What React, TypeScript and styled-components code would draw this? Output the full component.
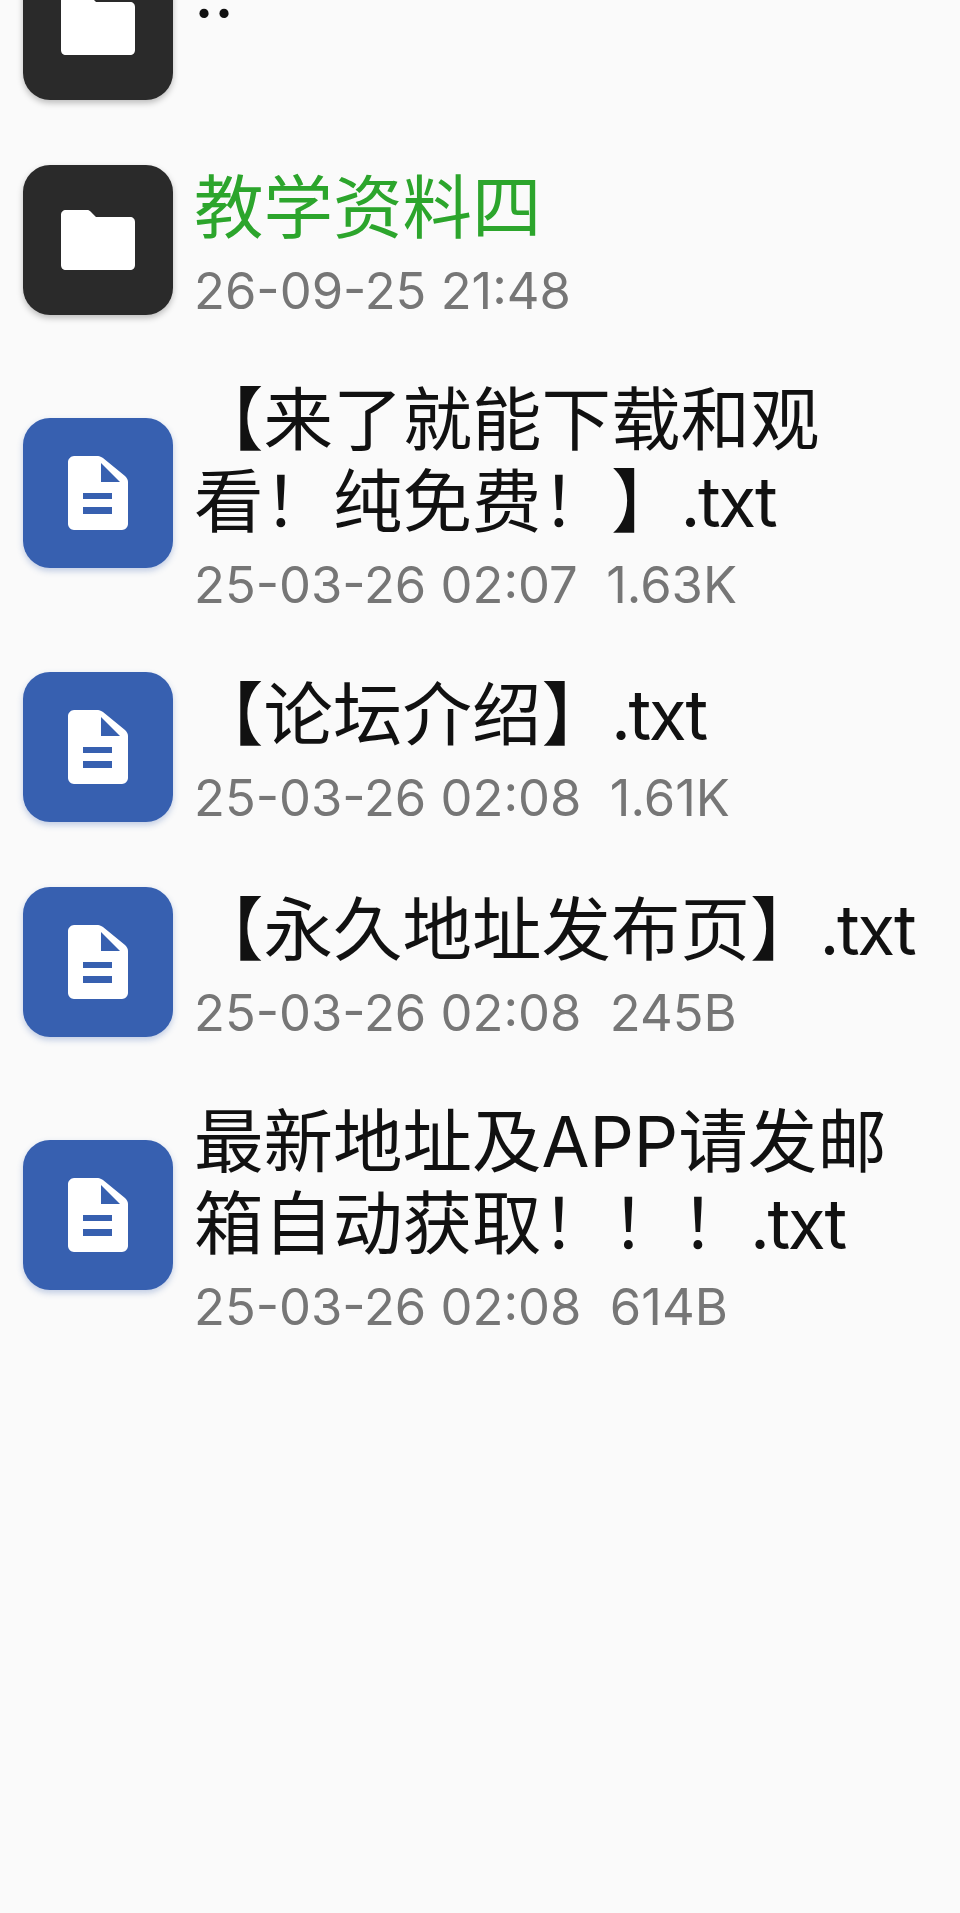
import React from 'react';
import styled, {createGlobalStyle} from 'styled-components';

type FileItem = {
    name: string
    ext?: string
    meta: string
    kind: 'folder' | 'file'
    accent?: boolean
}

const items: FileItem[] = [
    {name: '..', meta: '\u00a0', kind: 'folder'},
    {name: '教学资料四', meta: '26-09-25 21:48', kind: 'folder', accent: true},
    {name: '【来了就能下载和观看！纯免费！】', ext: '.txt', meta: '25-03-26 02:07  1.63K', kind: 'file'},
    {name: '【论坛介绍】', ext: '.txt', meta: '25-03-26 02:08  1.61K', kind: 'file'},
    {name: '【永久地址发布页】', ext: '.txt', meta: '25-03-26 02:08  245B', kind: 'file'},
    {name: '最新地址及APP请发邮箱自动获取！！！', ext: '.txt', meta: '25-03-26 02:08  614B', kind: 'file'},
];

const FolderIcon = () => (
    <svg width="74" height="60" viewBox="0 0 74 60">
        <path fill="#fff" d="M5 0H27C28 0 29 1 30 2L35 7H69C72 7 74 9 74 12V55C74 58 72 60 69 60H5C2 60 0 58 0 55V5C0 2 2 0 5 0Z"/>
    </svg>
);

const FileIcon = () => (
    <svg width="60" height="74" viewBox="0 0 60 74">
        <path fill="#fff" d="M6 0H30C32 0 33 1 35 2L57 20C59 22 60 24 60 26V68C60 71 57 74 54 74H6C3 74 0 71 0 68V6C0 3 3 0 6 0Z"/>
        <path fill="#3760b0" d="M33 7L52 26H33Z"/>
        <path fill="#3760b0" d="M15 37H44V43H15ZM15 51H44V58H15Z"/>
    </svg>
);

export default function App() {
    return (
        <>
            <GlobalStyle/>
            <Screen>
                <List>
                    {items.map(item => (
                        <Row key={item.name}>
                            <IconBox $kind={item.kind}>
                                {item.kind === 'folder' ? <FolderIcon/> : <FileIcon/>}
                            </IconBox>
                            <Info>
                                <Title $accent={item.accent}>
                                    {item.name}
                                    {item.ext && <Ext>{item.ext}</Ext>}
                                </Title>
                                <Meta>{item.meta}</Meta>
                            </Info>
                        </Row>
                    ))}
                </List>
            </Screen>
        </>
    );
}

const GlobalStyle = createGlobalStyle`
    html, body {
        margin: 0;
        padding: 0;
        background: #fafafa;
    }
`

const Screen = styled.div`
    width: 960px;
    height: 1913px;
    overflow: hidden;
    background: #fafafa;
    font-family: "Inter", "Noto Sans CJK SC", sans-serif;
`

const List = styled.div`
    display: flex;
    flex-direction: column;
    margin-top: -83px;
`

const Row = styled.div`
    display: flex;
    align-items: center;
    gap: 21px;
    min-height: 215px;
    box-sizing: border-box;
    padding: 28px 20px 28px 23px;
`

const IconBox = styled.div<{$kind: 'folder' | 'file'}>`
    flex: none;
    width: 150px;
    height: 150px;
    border-radius: 27px;
    display: flex;
    align-items: center;
    justify-content: center;
    background: ${({$kind}) => ($kind === 'folder' ? '#2a2a2a' : '#3760b0')};
    box-shadow: 0 3px 6px ${({$kind}) => ($kind === 'folder' ? 'rgba(0, 0, 0, 0.25)' : 'rgba(55, 96, 176, 0.3)')};
`

const Info = styled.div`
    flex: 1;
    min-width: 0;
    margin-top: 4px;
    display: flex;
    flex-direction: column;
`

const Title = styled.div<{$accent?: boolean}>`
    font-size: 69.5px;
    line-height: 82px;
    color: ${({$accent}) => ($accent ? '#2ca52c' : '#111')};
    word-break: break-all;
`

const Ext = styled.span`
    letter-spacing: -2.5px;
`

const Meta = styled.div`
    padding-top: 16px;
    font-size: 50.7px;
    line-height: 52px;
    color: #767676;
    white-space: pre;
`
